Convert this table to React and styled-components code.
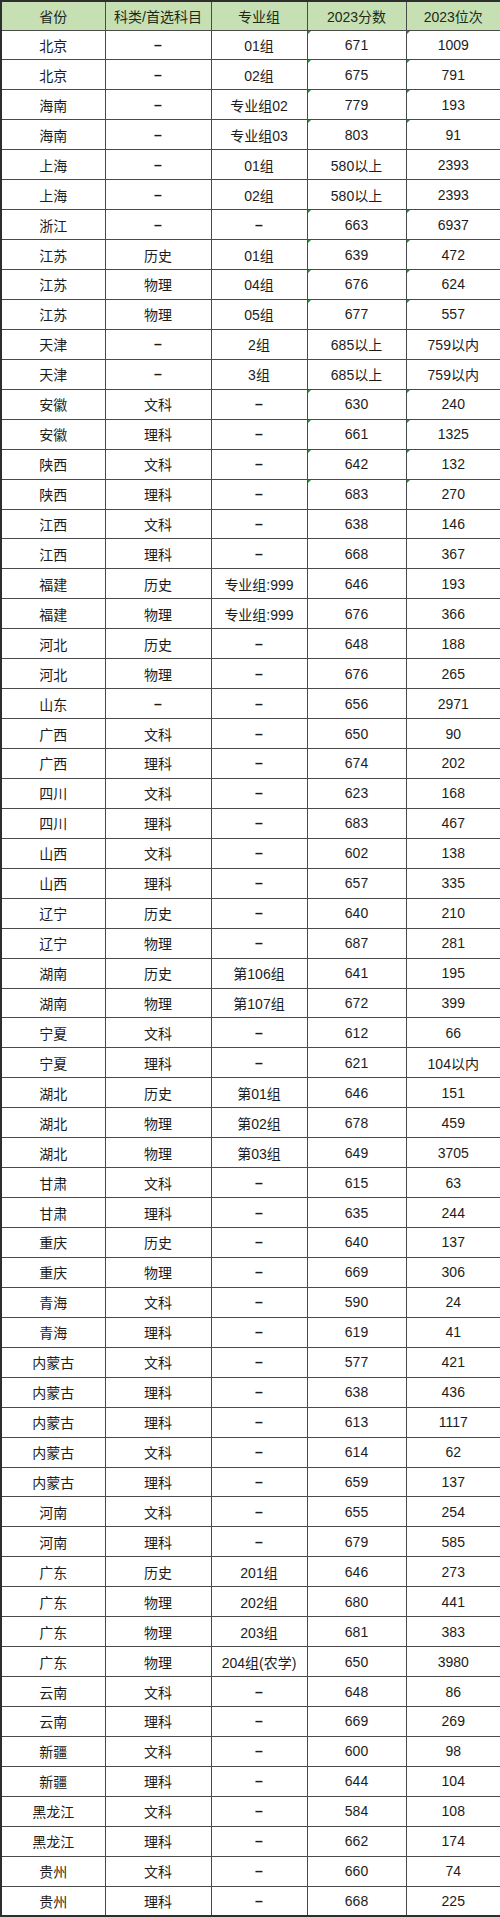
import React from 'react';
import styled, { createGlobalStyle } from 'styled-components';

const GlobalStyle = createGlobalStyle`
	body {
		margin: 0;
		background: #ffffff;
		font-family: "Liberation Sans", "Noto Sans CJK SC", sans-serif;
	}
`;

const rows = [
	['北京', '–', '01组', '671', '1009', true],
	['北京', '–', '02组', '675', '791', true],
	['海南', '–', '专业组02', '779', '193', true],
	['海南', '–', '专业组03', '803', '91', true],
	['上海', '–', '01组', '580以上', '2393'],
	['上海', '–', '02组', '580以上', '2393'],
	['浙江', '–', '–', '663', '6937', true],
	['江苏', '历史', '01组', '639', '472', true],
	['江苏', '物理', '04组', '676', '624', true],
	['江苏', '物理', '05组', '677', '557', true],
	['天津', '–', '2组', '685以上', '759以内'],
	['天津', '–', '3组', '685以上', '759以内'],
	['安徽', '文科', '–', '630', '240', true],
	['安徽', '理科', '–', '661', '1325', true],
	['陕西', '文科', '–', '642', '132', true],
	['陕西', '理科', '–', '683', '270', true],
	['江西', '文科', '–', '638', '146'],
	['江西', '理科', '–', '668', '367'],
	['福建', '历史', '专业组:999', '646', '193'],
	['福建', '物理', '专业组:999', '676', '366'],
	['河北', '历史', '–', '648', '188'],
	['河北', '物理', '–', '676', '265'],
	['山东', '–', '–', '656', '2971'],
	['广西', '文科', '–', '650', '90'],
	['广西', '理科', '–', '674', '202'],
	['四川', '文科', '–', '623', '168'],
	['四川', '理科', '–', '683', '467'],
	['山西', '文科', '–', '602', '138'],
	['山西', '理科', '–', '657', '335'],
	['辽宁', '历史', '–', '640', '210'],
	['辽宁', '物理', '–', '687', '281'],
	['湖南', '历史', '第106组', '641', '195'],
	['湖南', '物理', '第107组', '672', '399'],
	['宁夏', '文科', '–', '612', '66'],
	['宁夏', '理科', '–', '621', '104以内'],
	['湖北', '历史', '第01组', '646', '151'],
	['湖北', '物理', '第02组', '678', '459'],
	['湖北', '物理', '第03组', '649', '3705'],
	['甘肃', '文科', '–', '615', '63'],
	['甘肃', '理科', '–', '635', '244'],
	['重庆', '历史', '–', '640', '137'],
	['重庆', '物理', '–', '669', '306'],
	['青海', '文科', '–', '590', '24'],
	['青海', '理科', '–', '619', '41'],
	['内蒙古', '文科', '–', '577', '421'],
	['内蒙古', '理科', '–', '638', '436'],
	['内蒙古', '理科', '–', '613', '1117'],
	['内蒙古', '文科', '–', '614', '62'],
	['内蒙古', '理科', '–', '659', '137'],
	['河南', '文科', '–', '655', '254'],
	['河南', '理科', '–', '679', '585'],
	['广东', '历史', '201组', '646', '273'],
	['广东', '物理', '202组', '680', '441'],
	['广东', '物理', '203组', '681', '383'],
	['广东', '物理', '204组(农学)', '650', '3980'],
	['云南', '文科', '–', '648', '86'],
	['云南', '理科', '–', '669', '269'],
	['新疆', '文科', '–', '600', '98'],
	['新疆', '理科', '–', '644', '104'],
	['黑龙江', '文科', '–', '584', '108'],
	['黑龙江', '理科', '–', '662', '174'],
	['贵州', '文科', '–', '660', '74'],
	['贵州', '理科', '–', '668', '225'],
];

const headers = ['省份', '科类/首选科目', '专业组', '2023分数', '2023位次'];
const widths = [104, 106, 96, 99, 95];

function App() {
	return (
		<>
			<GlobalStyle />
			<Table>
				<colgroup>
					{widths.map((w, i) => (
						<col key={i} style={{ width: w }} />
					))}
				</colgroup>
				<thead>
					<HeadRow>
						{headers.map((h) => (
							<HeadCell key={h}>{h}</HeadCell>
						))}
					</HeadRow>
				</thead>
				<tbody>
					{rows.map((r, i) => (
						<Row key={i}>
							<Cell>{r[0]}</Cell>
							<Cell $dash={r[1] === '–'}>{r[1]}</Cell>
							<Cell $dash={r[2] === '–'}>{r[2]}</Cell>
							<Cell $flag={r[5]}>{r[3]}</Cell>
							<Cell $flag={r[5]}>{r[4]}</Cell>
						</Row>
					))}
				</tbody>
			</Table>
		</>
	);
}

const Table = styled.table`
	width: 500px;
	table-layout: fixed;
	border-collapse: collapse;
	border: 2px solid #2e2e2e;
	color: #1c1c1c;
	font-size: 14px;
`;

const HeadRow = styled.tr`
	height: 29px;
	background: #c6e0b4;
`;

const HeadCell = styled.th`
	font-weight: normal;
	color: #1d2a18;
	text-align: center;
	border: 1px solid #4a4a4a;
	padding: 0;
`;

const Row = styled.tr`
	height: 29.95px;
`;

const Cell = styled.td`
	position: relative;
	text-align: center;
	vertical-align: middle;
	border: 1px solid #4a4a4a;
	padding: 0;
	font-weight: ${(p) => (p.$dash ? 'bold' : 'normal')};

	&::before {
		content: '';
		display: ${(p) => (p.$flag ? 'block' : 'none')};
		position: absolute;
		left: 0;
		top: 0;
		border-top: 3px solid #2f8a3a;
		border-right: 3px solid transparent;
	}
`;

export default App;
